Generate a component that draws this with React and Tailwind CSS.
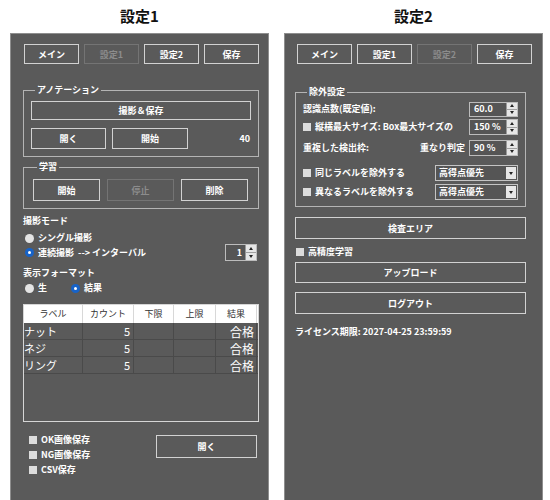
import React from "react";

function Btn({ children, disabled, className = "" }) {
  return (
    <div
      className={`flex items-center justify-center border text-[9px] font-bold leading-none ${
        disabled ? "border-[#747474] text-[#8c8c8c]" : "border-[#d2d2d2] text-white"
      } ${className}`}
    >
      {children}
    </div>
  );
}

function Radio({ checked }) {
  return checked ? (
    <span className="flex h-[9px] w-[9px] items-center justify-center rounded-full bg-[#1763c8]">
      <span className="h-[3px] w-[3px] rounded-full bg-white" />
    </span>
  ) : (
    <span className="h-[9px] w-[9px] rounded-full bg-[#e4e4e4]" />
  );
}

function Check() {
  return <span className="h-[8px] w-[8px] shrink-0 bg-[#dcdcdc]" />;
}

function Spinner() {
  return (
    <div className="flex h-full w-[11px] flex-col border-l border-[#9a9a9a] bg-[#e6e6e6]">
      <div className="flex flex-1 items-center justify-center border-b border-[#a0a0a0]">
        <span className="h-0 w-0 border-x-[2px] border-b-[3px] border-x-transparent border-b-[#222]" />
      </div>
      <div className="flex flex-1 items-center justify-center">
        <span className="h-0 w-0 border-x-[2px] border-t-[3px] border-x-transparent border-t-[#222]" />
      </div>
    </div>
  );
}

function NumBox({ value, className = "" }) {
  return (
    <div className={`flex h-[15px] border border-[#bcbcbc] bg-[#555] ${className}`}>
      <div className="flex flex-1 items-center pl-[4px] text-[9px] font-bold text-white">{value}</div>
      <Spinner />
    </div>
  );
}

function Select({ value }) {
  return (
    <div className="ml-auto flex h-[16px] w-[83px] items-center border border-[#c4c4c4] bg-[#555]">
      <div className="flex-1 pl-[3px] text-[9px] font-bold text-white">{value}</div>
      <div className="mr-[1px] flex h-[12px] w-[10px] items-center justify-center bg-[#e6e6e6]">
        <span className="h-0 w-0 border-x-[2px] border-t-[3px] border-x-transparent border-t-[#222]" />
      </div>
    </div>
  );
}

function Group({ title, className = "", children }) {
  return (
    <fieldset className={`border border-[#b4b4b4] ${className}`}>
      <legend className="ml-[4px] px-[2px] text-[9px] font-bold leading-[12px] text-white">{title}</legend>
      {children}
    </fieldset>
  );
}

const rows = [
  { label: "ナット", count: "5", result: "合格" },
  { label: "ネジ", count: "5", result: "合格" },
  { label: "リング", count: "5", result: "合格" },
];

function Panel1() {
  return (
    <div className="flex flex-1 flex-col border-x border-t border-[#8e8e8e] bg-[#5a5a5a] text-white">
      <div className="ml-[13px] mt-[10px] flex gap-[5px]">
        <Btn className="h-[20px] w-[55px]">メイン</Btn>
        <Btn disabled className="h-[20px] w-[55px]">設定1</Btn>
        <Btn className="h-[20px] w-[55px]">設定2</Btn>
        <Btn className="h-[20px] w-[55px]">保存</Btn>
      </div>

      <Group title="アノテーション" className="ml-[12px] mt-[20px] w-[236px] px-[7px] pb-[7px]">
        <Btn className="mt-[5px] h-[19px] w-full">撮影＆保存</Btn>
        <div className="mt-[8px] flex items-center">
          <Btn className="h-[21px] w-[75px]">開く</Btn>
          <Btn className="ml-[6px] h-[21px] w-[76px]">開始</Btn>
          <span className="ml-auto pr-[1px] text-[9px] font-bold">40</span>
        </div>
      </Group>

      <Group title="学習" className="ml-[12px] mt-[4px] w-[236px] pl-[9px] pb-[7px]">
        <div className="mt-[6px] flex gap-[7px]">
          <Btn className="h-[22px] w-[67px]">開始</Btn>
          <Btn disabled className="h-[22px] w-[67px]">停止</Btn>
          <Btn className="h-[22px] w-[67px]">削除</Btn>
        </div>
      </Group>

      <div className="ml-[12px] mt-[6px] text-[9px] font-bold leading-[12px]">撮影モード</div>
      <div className="ml-[14px] mt-[5px] flex h-[12px] items-center gap-[4px] text-[9px] font-bold">
        <Radio />
        <span>シングル撮影</span>
      </div>
      <div className="ml-[14px] mr-[11px] flex h-[17px] items-center gap-[4px] text-[9px] font-bold">
        <Radio checked />
        <span>連続撮影&nbsp;&nbsp;--&gt; インターバル</span>
        <div className="ml-auto flex h-[17px] w-[32px] border border-[#bcbcbc] bg-[#555]">
          <div className="flex flex-1 items-center justify-end pr-[3px] text-[9px] font-bold">1</div>
          <Spinner />
        </div>
      </div>

      <div className="ml-[12px] mt-[6px] text-[9px] font-bold leading-[12px]">表示フォーマット</div>
      <div className="ml-[14px] mt-[3px] flex h-[12px] items-center text-[9px] font-bold">
        <Radio />
        <span className="ml-[4px]">生</span>
        <span className="ml-[24px]">
          <Radio checked />
        </span>
        <span className="ml-[4px]">結果</span>
      </div>

      <div className="ml-[12px] mt-[10px] flex h-[118px] w-[236px] flex-col border border-[#d6d6d6]">
        <div className="grid h-[18px] grid-cols-[59px_51px_40px_42px_41px] bg-white text-[9px] text-[#333]">
          {["ラベル", "カウント", "下限", "上限", "結果"].map((h) => (
            <div key={h} className="flex items-center justify-center border-r border-[#d8d8d8]">
              {h}
            </div>
          ))}
        </div>
        {rows.map((r) => (
          <div key={r.label} className="grid h-[17px] grid-cols-[59px_51px_40px_42px_41px] border-b border-[#4a4a4a]">
            <div className="flex items-center border-r border-[#4a4a4a] text-[11px] leading-[14px]">{r.label}</div>
            <div className="flex items-center justify-end border-r border-[#4a4a4a] pr-[3px] text-[11px] leading-[14px]">{r.count}</div>
            <div className="border-r border-[#4a4a4a]" />
            <div className="border-r border-[#4a4a4a]" />
            <div className="flex items-center justify-end overflow-hidden border-r border-[#4a4a4a] pr-[2px] text-[12px] leading-[15px]">{r.result}</div>
          </div>
        ))}
      </div>

      <div className="mr-[11px] mt-[10px] flex">
        <div className="ml-[18px] flex flex-col text-[9px] font-bold">
          {["OK画像保存", "NG画像保存", "CSV保存"].map((t) => (
            <div key={t} className="flex h-[15px] items-center gap-[4px]">
              <Check />
              <span>{t}</span>
            </div>
          ))}
        </div>
        <Btn className="ml-auto mt-[3px] h-[23px] w-[101px]">開く</Btn>
      </div>
    </div>
  );
}

function Panel2() {
  return (
    <div className="flex flex-1 flex-col border-x border-t border-[#8e8e8e] bg-[#5a5a5a] text-white">
      <div className="ml-[12px] mt-[10px] flex gap-[5px]">
        <Btn className="h-[20px] w-[55px]">メイン</Btn>
        <Btn className="h-[20px] w-[55px]">設定1</Btn>
        <Btn disabled className="h-[20px] w-[55px]">設定2</Btn>
        <Btn className="h-[20px] w-[55px]">保存</Btn>
      </div>

      <Group title="除外設定" className="ml-[10px] mt-[22px] w-[231px] pl-[7px] pr-[7px] pb-[6px]">
        <div className="mt-[3px] flex h-[16px] items-center text-[9px] font-bold">
          <span>認識点数(既定値):</span>
          <NumBox value="60.0" className="ml-auto w-[49px]" />
        </div>
        <div className="mt-[2px] flex h-[16px] items-center gap-[4px] text-[9px] font-bold">
          <Check />
          <span>縦横最大サイズ: Box最大サイズの</span>
          <NumBox value="150 %" className="ml-auto h-[16px] w-[49px]" />
        </div>
        <div className="mt-[5px] flex h-[16px] items-center text-[9px] font-bold">
          <span>重複した検出枠:</span>
          <span className="ml-auto mr-[4px]">重なり判定</span>
          <NumBox value="90 %" className="h-[16px] w-[49px]" />
        </div>
        <div className="mt-[9px] flex h-[16px] items-center gap-[4px] text-[9px] font-bold">
          <Check />
          <span>同じラベルを除外する</span>
          <Select value="高得点優先" />
        </div>
        <div className="mt-[3px] flex h-[16px] items-center gap-[4px] text-[9px] font-bold">
          <Check />
          <span>異なるラベルを除外する</span>
          <Select value="高得点優先" />
        </div>
      </Group>

      <Btn className="ml-[10px] mt-[10px] h-[22px] w-[231px]">検査エリア</Btn>
      <div className="ml-[11px] mt-[7px] flex h-[12px] items-center gap-[4px] text-[9px] font-bold">
        <Check />
        <span>高精度学習</span>
      </div>
      <Btn className="ml-[10px] mt-[4px] h-[21px] w-[231px]">アップロード</Btn>
      <Btn className="ml-[10px] mt-[9px] h-[22px] w-[231px]">ログアウト</Btn>
      <div className="ml-[10px] mt-[12px] text-[9px] font-bold leading-[12px]">
        ライセンス期限: 2027-04-25 23:59:59
      </div>
    </div>
  );
}

export default function App() {
  return (
    <div className="flex h-[500px] w-[550px] gap-[15px] overflow-hidden bg-white pl-[10px] font-['Noto_Sans_CJK_JP','Noto_Sans',sans-serif]">
      <div className="flex w-[259px] flex-col">
        <div className="flex h-[33px] items-center justify-center text-[15px] font-bold text-[#111]">設定1</div>
        <Panel1 />
      </div>
      <div className="flex w-[259px] flex-col">
        <div className="flex h-[33px] items-center justify-center text-[15px] font-bold text-[#111]">設定2</div>
        <Panel2 />
      </div>
    </div>
  );
}
